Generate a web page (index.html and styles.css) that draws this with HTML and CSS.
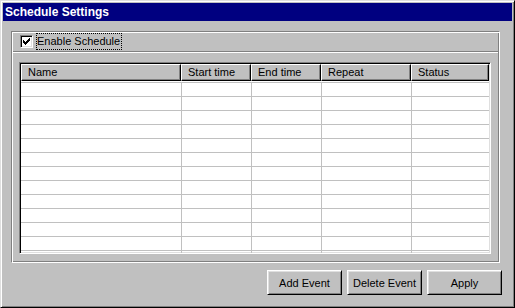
FILE: index.html
```html
<!DOCTYPE html>
<html lang="en">
<head>
    <meta charset="UTF-8">
    <title>Schedule Settings</title>
    <link rel="stylesheet" href="styles.css">
</head>
<body>
    <div class="window">
        <div class="titlebar">Schedule Settings</div>
        <div class="content">
            <div class="panel">
                <div class="enable-row">
                    <span class="checkbox">
                        <svg width="7" height="7" viewBox="0 0 7 7" shape-rendering="crispEdges">
                            <path d="M6 0h1v1h-1z M5 1h2v1h-2z M0 2h1v1h-1z M4 2h3v1h-3z M0 3h2v1h-2z M3 3h3v1h-3z M0 4h5v1h-5z M1 5h3v1h-3z M2 6h1v1h-1z" fill="#000"/>
                        </svg>
                    </span>
                    <span class="check-label">Enable Schedule</span>
                </div>
                <div class="list-area">
                    <div class="listview">
                        <div class="list-header">
                            <div class="col-head col-name">Name</div>
                            <div class="col-head col-start">Start time</div>
                            <div class="col-head col-end">End time</div>
                            <div class="col-head col-repeat">Repeat</div>
                            <div class="col-head col-status">Status</div>
                        </div>
                        <div class="list-rows">
                            <div class="list-row"><div></div><div></div><div></div><div></div><div></div></div>
                            <div class="list-row"><div></div><div></div><div></div><div></div><div></div></div>
                            <div class="list-row"><div></div><div></div><div></div><div></div><div></div></div>
                            <div class="list-row"><div></div><div></div><div></div><div></div><div></div></div>
                            <div class="list-row"><div></div><div></div><div></div><div></div><div></div></div>
                            <div class="list-row"><div></div><div></div><div></div><div></div><div></div></div>
                            <div class="list-row"><div></div><div></div><div></div><div></div><div></div></div>
                            <div class="list-row"><div></div><div></div><div></div><div></div><div></div></div>
                            <div class="list-row"><div></div><div></div><div></div><div></div><div></div></div>
                            <div class="list-row"><div></div><div></div><div></div><div></div><div></div></div>
                            <div class="list-row"><div></div><div></div><div></div><div></div><div></div></div>
                            <div class="list-row"><div></div><div></div><div></div><div></div><div></div></div>
                            <div class="list-row"><div></div><div></div><div></div><div></div><div></div></div>
                        </div>
                    </div>
                </div>
            </div>
            <div class="buttons">
                <button class="btn">Add Event</button>
                <button class="btn">Delete Event</button>
                <button class="btn">Apply</button>
            </div>
        </div>
    </div>
</body>
</html>
```

FILE: styles.css
```css
* {
    box-sizing: border-box;
}

body {
    margin: 0;
    background-color: #c0c0c0;
    font-family: "Liberation Sans", Arial, sans-serif;
    font-size: 11px;
    color: #000;
}

.window {
    width: 515px;
    height: 308px;
    padding: 2px;
    background-color: #c0c0c0;
    border: 1px solid;
    border-color: #dfdfdf #000 #000 #dfdfdf;
    box-shadow: inset 1px 1px #fff, inset -1px -1px #808080;
    display: flex;
    flex-direction: column;
}

.titlebar {
    height: 18px;
    line-height: 18px;
    padding-left: 2px;
    background-color: #000080;
    color: #fff;
    font-weight: bold;
    font-size: 12px;
}

.content {
    padding: 10px 10px 0 8px;
    display: flex;
    flex-direction: column;
}

/* etched box round the schedule */
.panel {
    height: 232px;
    margin-right: 2px;
    border: 1px solid;
    border-color: #808080 #fff #fff #808080;
    box-shadow: inset 1px 1px #fff, inset -1px -1px #808080;
    padding: 1px;
    display: flex;
    flex-direction: column;
}

.enable-row {
    height: 19px;
    padding-left: 7px;
    display: flex;
    align-items: flex-start;
    border-bottom: 1px solid #808080;
    box-shadow: 0 1px 0 #fff;
}

.checkbox {
    width: 13px;
    height: 13px;
    margin-top: 2px;
    background-color: #fff;
    border: 1px solid;
    border-color: #808080 #fff #fff #808080;
    box-shadow: inset 1px 1px #000, inset -1px -1px #dfdfdf;
    display: flex;
    padding: 2px 0 0 2px;
}

.checkbox svg {
    display: block;
}

.check-label {
    margin-left: 3px;
    height: 17px;
    line-height: 15px;
    padding-right: 1px;
    border: 1px dotted #000;
}

.list-area {
    padding: 10px 7px 7px 6px;
}

.listview {
    width: 472px;
    height: 192px;
    background-color: #fff;
    border: 1px solid;
    border-color: #808080 #fff #fff #808080;
    box-shadow: inset 1px 1px #000, inset -1px -1px #dfdfdf;
    padding: 1px;
    overflow: hidden;
}

.list-header {
    display: flex;
    height: 17px;
}

.col-head {
    height: 17px;
    line-height: 15px;
    padding-left: 6px;
    background-color: #c0c0c0;
    border: 1px solid;
    border-color: #fff #000 #000 #fff;
    box-shadow: inset -1px -1px #808080;
}

.col-name { width: 160px; }
.col-start { width: 70px; }
.col-end { width: 70px; }
.col-repeat { width: 90px; }
.col-status { width: 78px; }

.list-rows {
    margin-top: 1px;
}

.list-row {
    display: grid;
    grid-template-columns: 160px 70px 70px 90px 78px;
    height: 14px;
    border-top: 1px solid #c0c0c0;
}

.list-row div + div {
    border-left: 1px solid #c0c0c0;
}

.buttons {
    margin-top: 7px;
    display: flex;
    justify-content: flex-end;
    gap: 5px;
}

.btn {
    width: 75px;
    height: 25px;
    padding: 0;
    font-family: "Liberation Sans", Arial, sans-serif;
    font-size: 11px;
    color: #000;
    background-color: #c0c0c0;
    border: 1px solid;
    border-color: #fff #000 #000 #fff;
    box-shadow: inset 1px 1px #dfdfdf, inset -1px -1px #808080;
}
```
